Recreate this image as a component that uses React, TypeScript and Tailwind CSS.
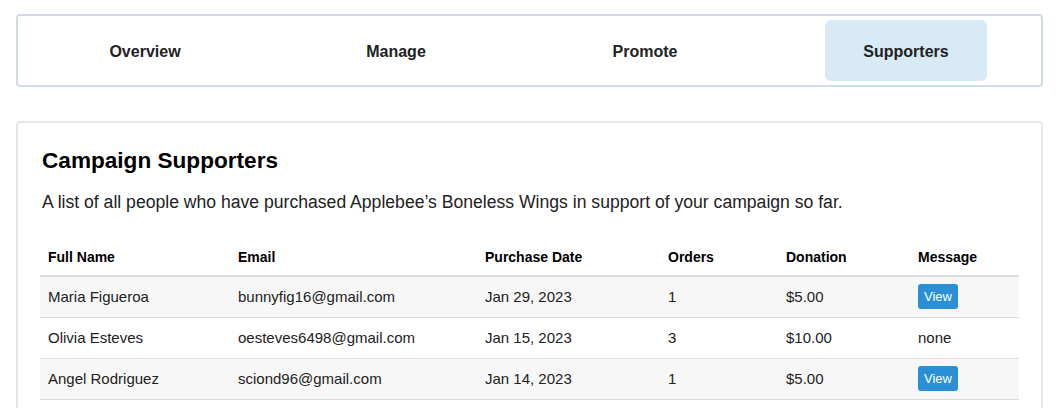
const TABS = [
  { label: 'Overview', ml: 'ml-[42px]', active: false },
  { label: 'Manage', ml: 'ml-[89px]', active: false },
  { label: 'Promote', ml: 'ml-[87px]', active: false },
  { label: 'Supporters', ml: 'ml-[99px]', active: true },
]

const SUPPORTERS = [
  { name: 'Maria Figueroa', email: 'bunnyfig16@gmail.com', date: 'Jan 29, 2023', orders: 1, donation: '$5.00', message: true },
  { name: 'Olivia Esteves', email: 'oesteves6498@gmail.com', date: 'Jan 15, 2023', orders: 3, donation: '$10.00', message: false },
  { name: 'Angel Rodriguez', email: 'sciond96@gmail.com', date: 'Jan 14, 2023', orders: 1, donation: '$5.00', message: true },
]

const COLUMNS = ['Full Name', 'Email', 'Purchase Date', 'Orders', 'Donation', 'Message']
const COL_WIDTHS = ['w-[190px]', 'w-[247px]', 'w-[183px]', 'w-[118px]', 'w-[132px]', 'w-[109px]']

export default function App() {
  return (
    <div className="min-h-screen bg-white px-4 pt-[14px] font-['Liberation_Sans',Arial,sans-serif] text-[#222]">
      {/* tab bar */}
      <nav className="flex rounded-[4px] border-2 border-[#cfdce1] p-[4px]">
        {TABS.map((t) => (
          <div
            key={t.label}
            className={`${t.ml} flex h-[61px] w-[162px] items-center justify-center rounded-[6px] pt-[2px] text-[16px] font-bold ${
              t.active ? 'bg-[#d8eaf6]' : ''
            }`}
          >
            {t.label}
          </div>
        ))}
      </nav>

      {/* supporters card */}
      <section className="mt-[34px] rounded-[4px] border-2 border-[#e6e6e6] px-[22px] pt-6 pb-6">
        <div className="pl-[2px]">
          <h2 className="text-[22.6px] font-bold leading-[28px] text-black">Campaign Supporters</h2>
          <p className="mt-[15px] text-[17.6px] leading-[24px] text-[#222]">
            A list of all people who have purchased Applebee’s Boneless Wings in support of your campaign so far.
          </p>
        </div>

        <table className="mt-[25px] w-full table-fixed border-collapse text-left">
          <colgroup>
            {COL_WIDTHS.map((w, i) => (
              <col key={i} className={w} />
            ))}
          </colgroup>
          <thead>
            <tr className="border-b-2 border-[#dddddd]">
              {COLUMNS.map((c) => (
                <th key={c} className="px-2 pt-2 pb-[8px] align-bottom text-[14px] font-bold leading-5 text-black">
                  {c}
                </th>
              ))}
            </tr>
          </thead>
          <tbody>
            {SUPPORTERS.map((s, i) => (
              <tr key={s.email} className={`border-b border-[#dddddd] ${i % 2 === 0 ? 'bg-[#f7f7f7]' : 'bg-white'}`}>
                <td className="h-[41px] px-2 text-[15px] leading-5">{s.name}</td>
                <td className="px-2 text-[15px] leading-5">{s.email}</td>
                <td className="px-2 text-[15px] leading-5">{s.date}</td>
                <td className="px-2 text-[15px] leading-5">{s.orders}</td>
                <td className="px-2 text-[15px] leading-5">{s.donation}</td>
                <td className="px-2 text-[15px] leading-5">
                  {s.message ? (
                    <button className="h-[25px] rounded-[3px] bg-[#2b8fd5] px-[6px] text-[13px] leading-[25px] text-white">
                      View
                    </button>
                  ) : (
                    'none'
                  )}
                </td>
              </tr>
            ))}
          </tbody>
        </table>
      </section>
    </div>
  )
}
